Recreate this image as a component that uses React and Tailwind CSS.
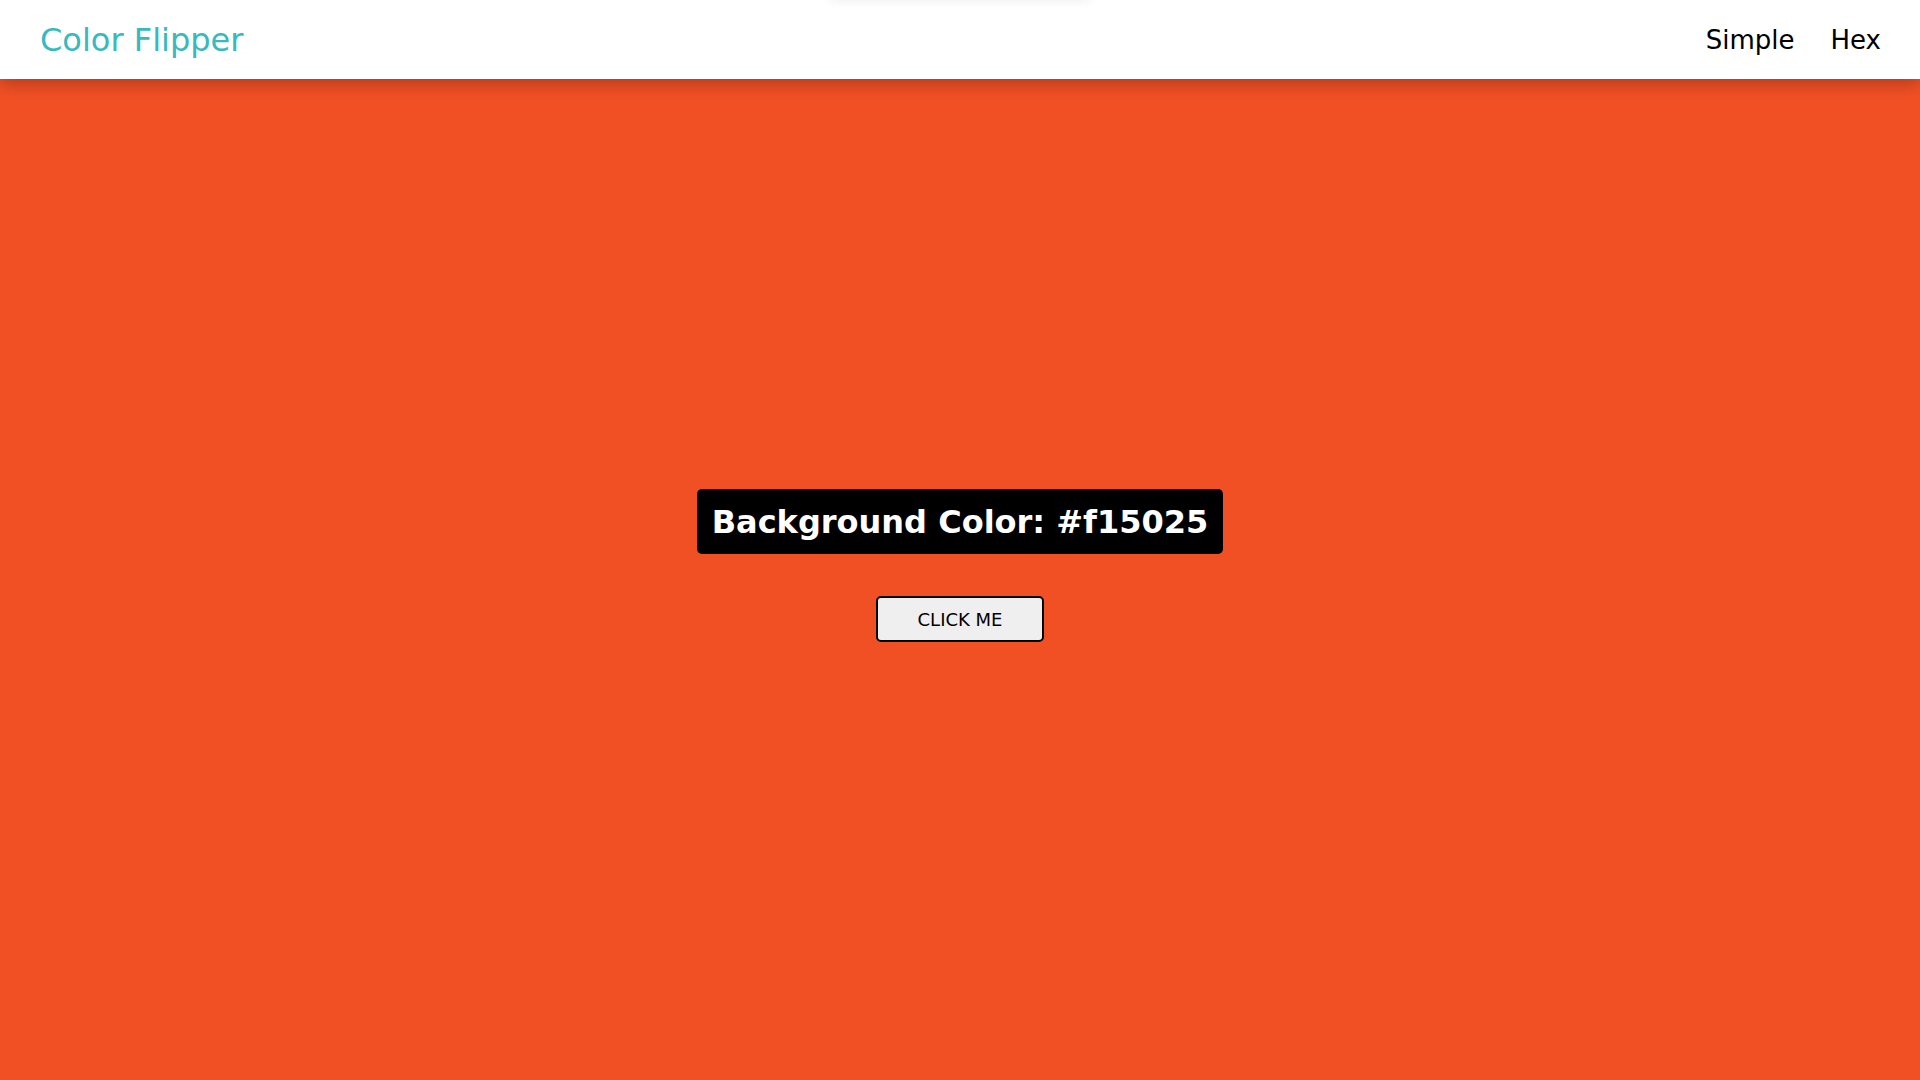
export default function App() {
  return (
    <div className="relative h-[1080px] w-[1920px] flex flex-col bg-[#f15025] overflow-hidden" style={{ fontFamily: '"DejaVu Sans", Verdana, sans-serif' }}>
      <nav className="relative z-10 h-[79px] bg-white flex items-center justify-between pl-[40px] pr-[39px] shadow-[0_5px_15px_rgba(0,0,0,0.25)]">
        <h4 className="text-[32px] leading-none text-[#37b9bd]">Color Flipper</h4>
        <ul className="flex gap-[36px] text-[26px] leading-none text-black">
          <li>Simple</li>
          <li>Hex</li>
        </ul>
        <div className="absolute top-[-20px] left-[830px] w-[260px] h-[20px] shadow-[0_2px_10px_rgba(0,0,0,0.06)]" />
      </nav>
      <main className="flex-1 flex flex-col items-center pt-[410px]">
        <h2 className="bg-black text-white rounded-[5px] h-[65px] px-[15px] flex items-center text-[32px] font-bold">
          Background Color: #f15025
        </h2>
        <button className="mt-[42px] w-[168px] h-[46px] bg-[#efefef] border-2 border-black rounded-[5px] text-[18px] text-black">
          CLICK ME
        </button>
      </main>
    </div>
  );
}
